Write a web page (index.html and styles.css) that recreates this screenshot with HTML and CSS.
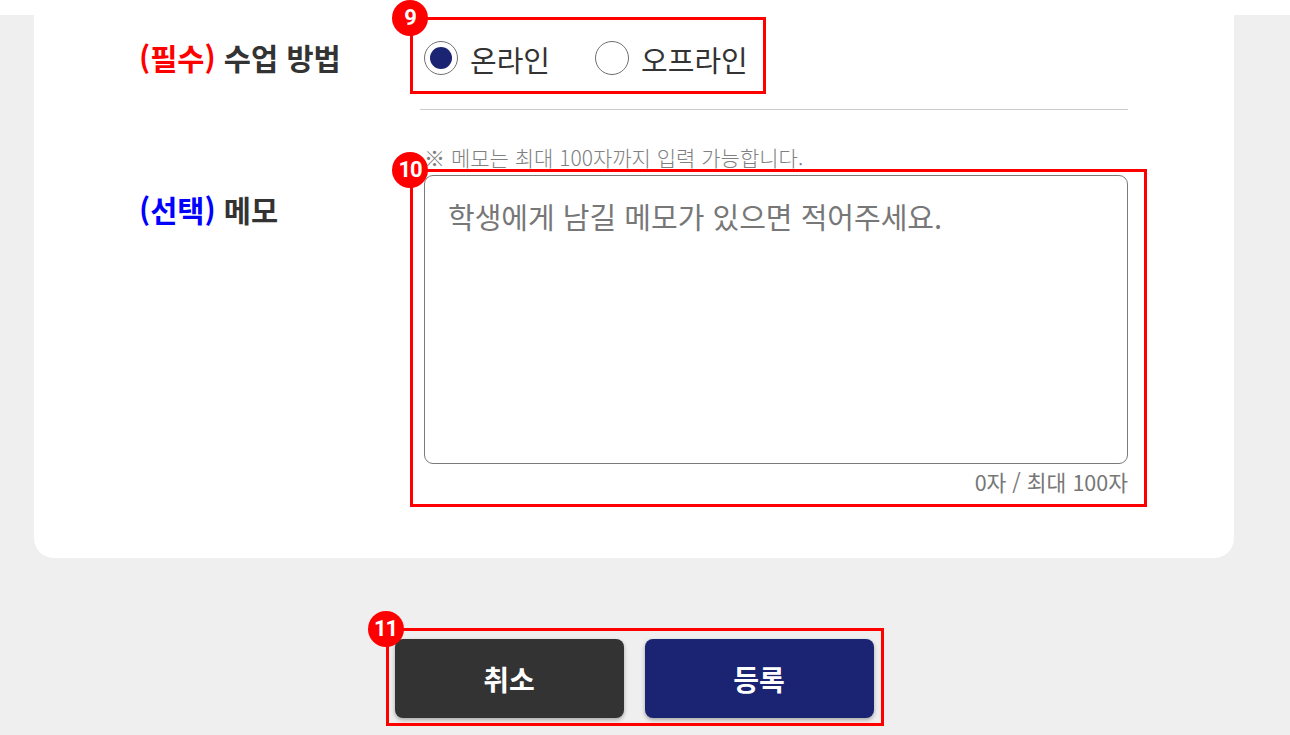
FILE: index.html
```html
<!DOCTYPE html>
<html lang="ko">
<head>
<meta charset="utf-8">
<title>수업 등록</title>
<link rel="stylesheet" href="styles.css">
</head>
<body>
<div class="topstrip"></div>
<div class="card">
  <div class="row row-method">
    <div class="label label-method"><span class="req">(필수)</span> 수업 방법</div>
    <div class="field">
      <div class="radio-group">
        <label class="option"><span class="radio checked"><span class="dot"></span></span><span class="opt-text">온라인</span></label>
        <label class="option"><span class="radio"></span><span class="opt-text">오프라인</span></label>
        <div class="annot annot-9"><span class="badge">9</span></div>
      </div>
      <div class="divider"></div>
    </div>
  </div>
  <div class="row row-memo">
    <div class="label label-memo"><span class="opt">(선택)</span> 메모</div>
    <div class="field">
      <div class="note">※ 메모는 최대 100자까지 입력 가능합니다.</div>
      <div class="memo-wrap">
        <textarea class="memo" placeholder="학생에게 남길 메모가 있으면 적어주세요."></textarea>
        <div class="counter">0자 / 최대 100자</div>
        <div class="annot annot-10"><span class="badge">10</span></div>
      </div>
    </div>
  </div>
</div>
<div class="actions">
  <div class="btn-group">
    <button class="btn btn-cancel">취소</button>
    <button class="btn btn-submit">등록</button>
    <div class="annot annot-11"><span class="badge">11</span></div>
  </div>
</div>
</body>
</html>
```
FILE: styles.css
```css
html, body {
  margin: 0;
  padding: 0;
}
body {
  width: 1290px;
  height: 735px;
  overflow: hidden;
  background: #efefef;
  font-family: "Noto Sans CJK KR", "Noto Sans", sans-serif;
  color: #333;
}
.topstrip {
  height: 15px;
  background: #fff;
}
.card {
  margin-left: 34px;
  width: 1200px;
  box-sizing: border-box;
  background: #fff;
  border-radius: 0 0 20px 20px;
  padding: 0 106px 61px 105px;
}
.row {
  display: grid;
  grid-template-columns: 285px 704px;
}
.label {
  font-size: 29.5px;
  line-height: 40px;
  font-weight: 700;
  color: #333;
  white-space: nowrap;
}
.label-method {
  padding-top: 22px;
}
.label-memo {
  padding-top: 79px;
}
.req {
  color: #ff0000;
}
.opt {
  color: #0000ff;
}
.field {
  display: flex;
  flex-direction: column;
  align-items: flex-start;
}
.radio-group {
  position: relative;
  display: inline-flex;
  align-items: center;
  margin-top: 25px;
  height: 36px;
}
.option {
  display: inline-flex;
  align-items: center;
  gap: 12px;
  margin-right: 45px;
}
.option:last-of-type {
  margin-right: 0;
}
.radio {
  width: 34px;
  height: 34px;
  box-sizing: border-box;
  border: 1px solid #6f6f6f;
  border-radius: 50%;
  background: #fff;
  display: flex;
  align-items: center;
  justify-content: center;
}
.dot {
  width: 22px;
  height: 22px;
  border-radius: 50%;
  background: #1a2473;
}
.opt-text {
  font-size: 29px;
  line-height: 36px;
  color: #333;
  padding-top: 2px;
}
.divider {
  margin-top: 33px;
  margin-left: -4px;
  width: 708px;
  height: 1px;
  background: #cccccc;
}
.note {
  margin-top: 34px;
  font-size: 21px;
  line-height: 26px;
  font-weight: 300;
  color: #808080;
}
.memo-wrap {
  position: relative;
  margin-top: 5px;
  width: 704px;
}
.memo {
  display: block;
  width: 704px;
  height: 289px;
  box-sizing: border-box;
  border: 1px solid #7a7a7a;
  border-radius: 9px;
  padding: 20px 23px;
  font-family: "Noto Sans CJK KR", "Noto Sans", sans-serif;
  font-size: 29px;
  line-height: 40px;
  color: #333;
  resize: none;
  outline: none;
  background: #fff;
}
.memo::placeholder {
  color: #777;
  opacity: 1;
}
.counter {
  margin-top: 3px;
  text-align: right;
  font-size: 21.5px;
  line-height: 30px;
  color: #777;
}
.actions {
  margin-left: 34px;
  width: 1200px;
  display: flex;
  justify-content: center;
  padding-top: 81px;
}
.btn-group {
  position: relative;
  display: flex;
  gap: 21px;
}
.btn {
  width: 229px;
  height: 79px;
  border: none;
  border-radius: 8px;
  font-family: "Noto Sans CJK KR", "Noto Sans", sans-serif;
  font-size: 28px;
  font-weight: 700;
  color: #fff;
  box-shadow: 0 2px 4px rgba(0, 0, 0, 0.3);
  cursor: pointer;
}
.btn-cancel {
  background: #333333;
}
.btn-submit {
  background: #1a2473;
}
.annot {
  position: absolute;
  border: 3px solid #ff0000;
  pointer-events: none;
}
.annot-9 {
  top: -23px;
  left: -14px;
  right: -18px;
  bottom: -18px;
}
.annot-10 {
  top: -6px;
  left: -14px;
  right: -19px;
  bottom: -10px;
}
.annot-11 {
  top: -11px;
  left: -9px;
  right: -10px;
  bottom: -8px;
}
.badge {
  position: absolute;
  left: -21px;
  top: -20px;
  width: 36px;
  height: 36px;
  border-radius: 50%;
  background: #ff0000;
  color: #fff;
  font-family: "Roboto", "Noto Sans", sans-serif;
  font-weight: 700;
  font-size: 22px;
  line-height: 36px;
  text-align: center;
  letter-spacing: -1px;
}
```
